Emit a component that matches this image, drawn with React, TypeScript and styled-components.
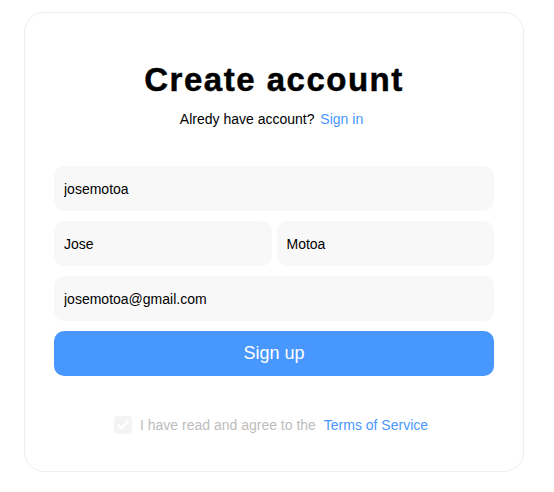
import React from "react";
import styled, { createGlobalStyle } from "styled-components";

const GlobalStyle = createGlobalStyle`
  html, body {
    margin: 0;
    padding: 0;
    background: #ffffff;
    font-family: "Liberation Sans", Arial, sans-serif;
  }
  * { box-sizing: border-box; }
`;

const Page = styled.div`
  padding: 12px 30px 20px 24px;
`;

const Card = styled.div`
  width: 500px;
  height: 460px;
  border: 1px solid #efefef;
  border-radius: 20px;
  background: #fff;
  padding: 48px 29px 0 29px;
  display: flex;
  flex-direction: column;
`;

const Title = styled.h1`
  margin: 0;
  text-align: center;
  font-size: 33px;
  line-height: 38px;
  font-weight: 700;
  letter-spacing: 1.5px;
  -webkit-text-stroke: 0.5px #000;
  color: #000;
`;

const Subtitle = styled.p`
  margin: 12px 0 0 0;
  padding-right: 5px;
  text-align: center;
  font-size: 14px;
  line-height: 16px;
  color: #000;
`;

const Link = styled.a`
  color: #4897ff;
  text-decoration: none;
  margin-left: 2px;
  cursor: pointer;
`;

const Form = styled.form`
  margin-top: 39px;
  display: flex;
  flex-direction: column;
  gap: 10px;
`;

const Row = styled.div`
  display: grid;
  grid-template-columns: 1fr 1fr;
  gap: 5px;
`;

const Input = styled.input`
  width: 100%;
  height: 45px;
  border: none;
  outline: none;
  border-radius: 10px;
  background: #f8f8f8;
  padding: 0 10px;
  font-family: "Liberation Sans", Arial, sans-serif;
  font-size: 14px;
  color: #000;
`;

const Button = styled.button`
  height: 45px;
  border: none;
  border-radius: 10px;
  background: #4897ff;
  color: #fff;
  font-family: "Liberation Sans", Arial, sans-serif;
  font-size: 18px;
  cursor: pointer;
`;

const Terms = styled.label`
  margin-top: 39px;
  padding-right: 6px;
  display: flex;
  align-items: center;
  justify-content: center;
  gap: 8px;
  font-size: 14px;
  line-height: 20px;
  color: #bdbdbd;
`;

const Check = styled.span`
  width: 18px;
  height: 18px;
  border-radius: 4px;
  background: #f4f4f4;
  display: inline-flex;
  align-items: center;
  justify-content: center;
`;

const TermsLink = styled.a`
  color: #4897ff;
  text-decoration: none;
  margin-left: 4px;
`;

export default function App() {
  return (
    <>
      <GlobalStyle />
      <Page>
        <Card>
          <Title>Create account</Title>
          <Subtitle>
            Alredy have account? <Link>Sign in</Link>
          </Subtitle>
          <Form onSubmit={(e) => e.preventDefault()}>
            <Input defaultValue="josemotoa" />
            <Row>
              <Input defaultValue="Jose" />
              <Input defaultValue="Motoa" />
            </Row>
            <Input defaultValue="josemotoa@gmail.com" />
            <Button type="submit">Sign up</Button>
          </Form>
          <Terms>
            <Check>
              <svg width="14" height="14" viewBox="0 0 14 14" fill="none">
                <path
                  d="M2.5 7.2 L5.6 10.4 L11.6 3.2"
                  stroke="#ffffff"
                  strokeWidth="2.4"
                  strokeLinecap="round"
                  strokeLinejoin="round"
                />
              </svg>
            </Check>
            <span>
              I have read and agree to the <TermsLink>Terms of Service</TermsLink>
            </span>
          </Terms>
        </Card>
      </Page>
    </>
  );
}
